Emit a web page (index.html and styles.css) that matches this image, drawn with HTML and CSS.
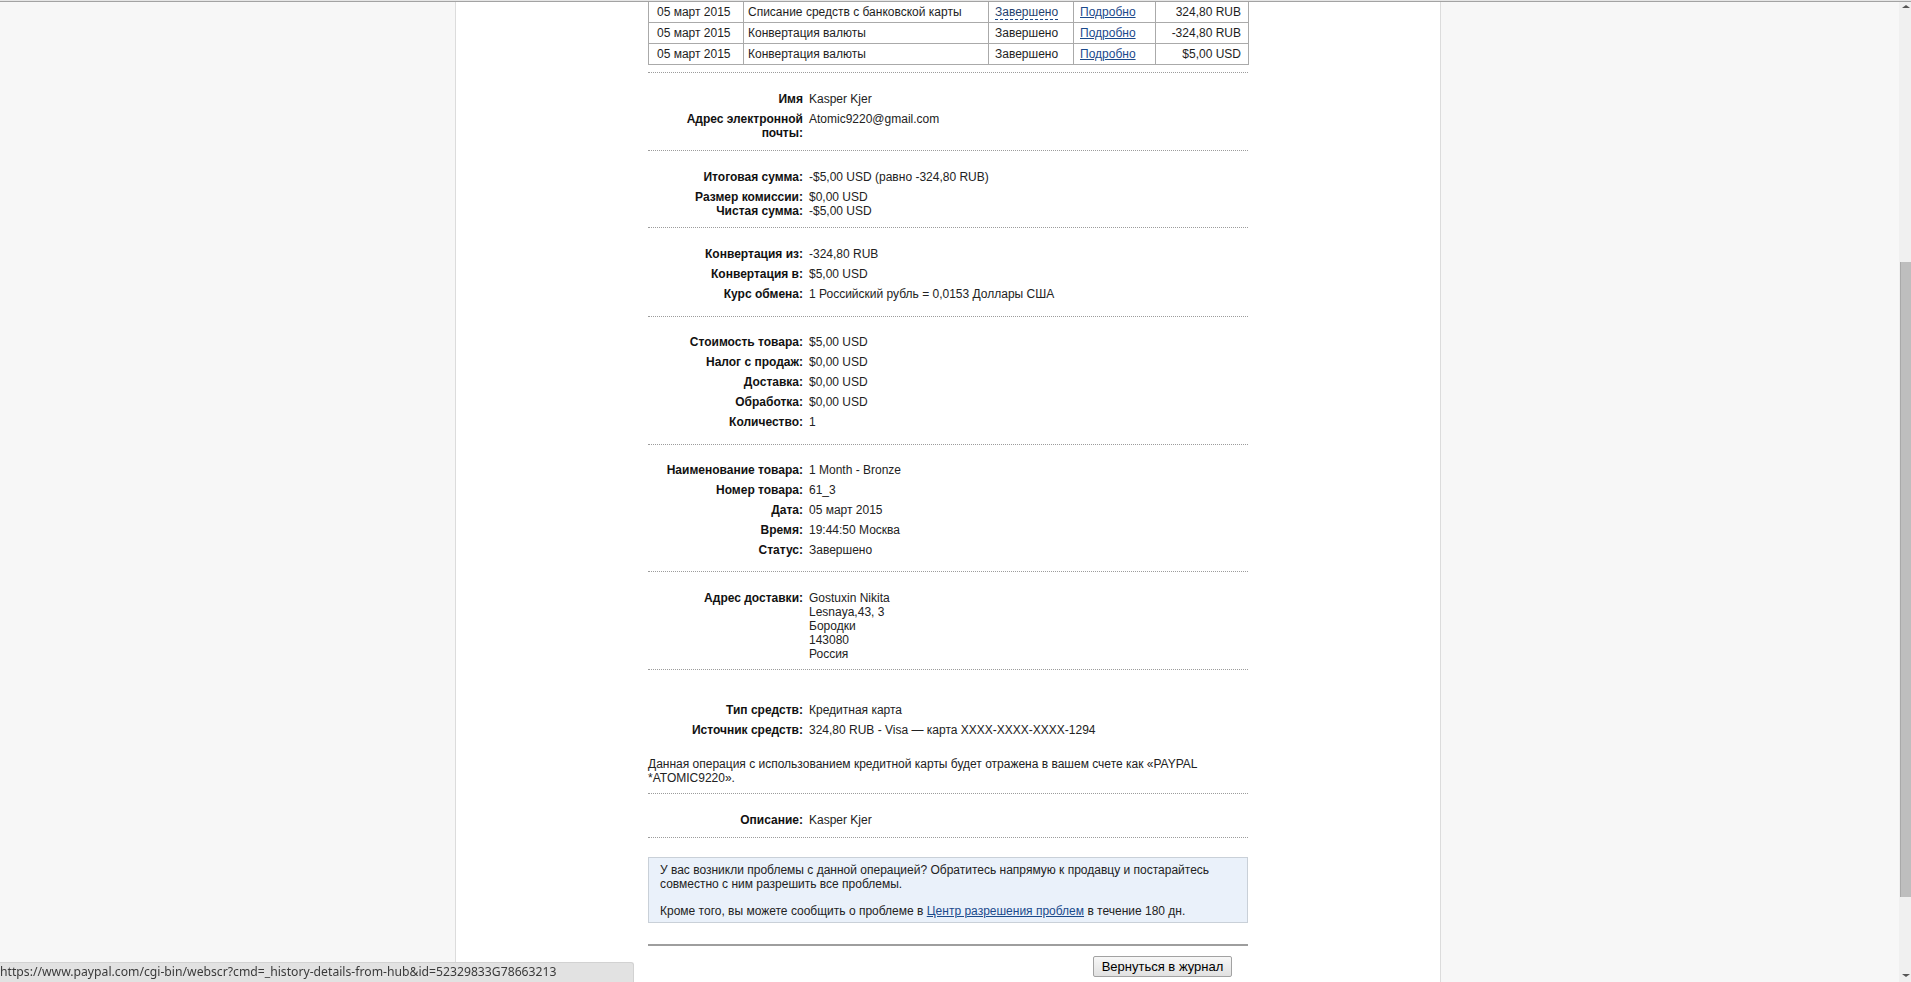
FILE: index.html
```html
<!DOCTYPE html>
<html lang="ru">
<head>
	<meta charset="UTF-8">
	<title>Подробности операции</title>
	<link rel="stylesheet" href="styles.css">
</head>
<body>
	<div class="chrome_line"></div>
	<div class="page">
		<div class="side side_l"></div>
		<div class="main">
			<div class="content">
				<div class="sec sec_table">
					<table class="hist">
						<colgroup>
							<col class="c_date"><col class="c_desc"><col class="c_stat"><col class="c_more"><col class="c_sum">
						</colgroup>
						<tr>
							<td class="t_date">05 март 2015</td>
							<td class="t_desc">Списание средств с банковской карты</td>
							<td class="t_stat"><span class="dash">Завершено</span></td>
							<td class="t_more"><a href="#">Подробно</a></td>
							<td class="t_sum">324,80 RUB</td>
						</tr>
						<tr>
							<td class="t_date">05 март 2015</td>
							<td class="t_desc">Конвертация валюты</td>
							<td class="t_stat">Завершено</td>
							<td class="t_more"><a href="#">Подробно</a></td>
							<td class="t_sum">-324,80 RUB</td>
						</tr>
						<tr>
							<td class="t_date">05 март 2015</td>
							<td class="t_desc">Конвертация валюты</td>
							<td class="t_stat">Завершено</td>
							<td class="t_more"><a href="#">Подробно</a></td>
							<td class="t_sum">$5,00 USD</td>
						</tr>
					</table>
				</div>

				<div class="sec sec_name">
					<div class="row"><div class="lbl">Имя</div><div class="val">Kasper Kjer</div></div>
					<div class="row"><div class="lbl">Адрес электронной почты:</div><div class="val">Atomic9220@gmail.com</div></div>
				</div>

				<div class="sec sec_total">
					<div class="row"><div class="lbl">Итоговая сумма:</div><div class="val">-$5,00 USD (равно -324,80 RUB)</div></div>
					<div class="row"><div class="lbl">Размер комиссии:</div><div class="val">$0,00 USD</div></div>
					<div class="row tight"><div class="lbl">Чистая сумма:</div><div class="val">-$5,00 USD</div></div>
				</div>

				<div class="sec sec_conv">
					<div class="row"><div class="lbl">Конвертация из:</div><div class="val">-324,80 RUB</div></div>
					<div class="row"><div class="lbl">Конвертация в:</div><div class="val">$5,00 USD</div></div>
					<div class="row"><div class="lbl">Курс обмена:</div><div class="val">1 Российский рубль = 0,0153 Доллары США</div></div>
				</div>

				<div class="sec sec_cost">
					<div class="row"><div class="lbl">Стоимость товара:</div><div class="val">$5,00 USD</div></div>
					<div class="row"><div class="lbl">Налог с продаж:</div><div class="val">$0,00 USD</div></div>
					<div class="row"><div class="lbl">Доставка:</div><div class="val">$0,00 USD</div></div>
					<div class="row"><div class="lbl">Обработка:</div><div class="val">$0,00 USD</div></div>
					<div class="row"><div class="lbl">Количество:</div><div class="val">1</div></div>
				</div>

				<div class="sec sec_item">
					<div class="row"><div class="lbl">Наименование товара:</div><div class="val">1 Month - Bronze</div></div>
					<div class="row"><div class="lbl">Номер товара:</div><div class="val">61_3</div></div>
					<div class="row"><div class="lbl">Дата:</div><div class="val">05 март 2015</div></div>
					<div class="row"><div class="lbl">Время:</div><div class="val">19:44:50 Москва</div></div>
					<div class="row"><div class="lbl">Статус:</div><div class="val">Завершено</div></div>
				</div>

				<div class="sec sec_addr">
					<div class="row"><div class="lbl">Адрес доставки:</div><div class="val">Gostuxin Nikita<br>Lesnaya,43, 3<br>Бородки<br>143080<br>Россия</div></div>
				</div>

				<div class="sec sec_fund">
					<div class="row"><div class="lbl">Тип средств:</div><div class="val">Кредитная карта</div></div>
					<div class="row"><div class="lbl">Источник средств:</div><div class="val">324,80 RUB - Visa — карта XXXX-XXXX-XXXX-1294</div></div>
					<p class="note">Данная операция с использованием кредитной карты будет отражена в вашем счете как «PAYPAL *ATOMIC9220».</p>
				</div>

				<div class="sec sec_desc">
					<div class="row"><div class="lbl">Описание:</div><div class="val">Kasper Kjer</div></div>
				</div>

				<div class="help">
					<p>У вас возникли проблемы с данной операцией? Обратитесь напрямую к продавцу и постарайтесь совместно с ним разрешить все проблемы.</p>
					<p>Кроме того, вы можете сообщить о проблеме в <a href="#">Центр разрешения проблем</a> в течение 180 дн.</p>
				</div>

				<div class="actions">
					<button class="btn" type="button">Вернуться в журнал</button>
				</div>
			</div>
		</div>
		<div class="side side_r"></div>
		<div class="scroll">
			<div class="sb_up"></div>
			<div class="sb_gap"></div>
			<div class="sb_thumb"></div>
			<div class="sb_rest"></div>
			<div class="sb_down"></div>
		</div>
	</div>
	<div class="status">https://www.paypal.com/cgi-bin/webscr?cmd=_history-details-from-hub&amp;id=52329833G78663213</div>
</body>
</html>
```

FILE: styles.css
```css
body{
	margin:0;
	height:982px;
	overflow:hidden;
	font:12px/14px "Liberation Sans", Arial, sans-serif;
	color:#1e1e1e;
}
p{
	margin:0;
}
a{
	color:#1b4a8c;
	text-decoration:underline;
}
.chrome_line{
	position:fixed;
	left:0;
	top:0;
	width:100%;
	height:1px;
	background:#e6e6e6;
	border-bottom:1px solid #a3a3a3;
	z-index:5;
}
.page{
	display:flex;
	height:982px;
}
.side{
	background:#f7f7f7;
}
.side_l{
	width:455px;
}
.side_r{
	flex:1;
}
.main{
	width:984px;
	padding-top:2px;
	background:#fff;
	border-left:1px solid #dcdcdc;
	border-right:1px solid #dcdcdc;
}
.content{
	width:600px;
	margin:0 auto;
}

/* history table */
.sec{
	border-bottom:1px dotted #9c9c9c;
}
.sec_table{
	padding-bottom:7px;
}
.hist{
	width:600px;
	border-collapse:collapse;
	table-layout:fixed;
}
.c_date{ width:95px; }
.c_desc{ width:245px; }
.c_stat{ width:85px; }
.c_more{ width:82px; }
.c_sum{ width:93px; }
.hist td{
	height:20px;
	padding:0 4px;
	border:1px solid #aaa;
	white-space:nowrap;
	overflow:hidden;
}
.hist tr:first-child td{
	border-top:0;
}
.hist .t_date{
	padding-left:8px;
}
.hist .t_stat,.hist .t_more{
	padding-left:6px;
}
.hist .t_sum{
	text-align:right;
	padding-right:7px;
}
.dash{
	color:#1f3f6e;
	border-bottom:1px dashed #1b4a8c;
}

/* label / value rows */
.row{
	display:flex;
	margin-top:6px;
}
.row:first-child{
	margin-top:0;
}
.row.tight{
	margin-top:0;
}
.lbl{
	width:155px;
	flex:none;
	text-align:right;
	font-weight:bold;
	color:#111;
}
.val{
	margin-left:6px;
	color:#222;
}
.sec_name{ padding:19px 0 10px; }
.sec_total{ padding:19px 0 9px; }
.sec_conv{ padding:19px 0 15px; }
.sec_cost{ padding:18px 0 15px; }
.sec_item{ padding:18px 0 14px; }
.sec_addr{ padding:19px 0 8px; }
.sec_fund{ padding:33px 0 8px; }
.sec_desc{ padding:19px 0 10px; }
.note{
	margin-top:20px;
	color:#222;
}

/* help box */
.help{
	margin-top:19px;
	padding:5px 11px 4px;
	background:#eaf1fa;
	border:1px solid #c9d0d8;
	color:#222;
}
.help p+p{
	margin-top:13px;
}
.actions{
	margin-top:21px;
	padding-top:10px;
	border-top:2px solid #9e9e9e;
	display:flex;
	justify-content:flex-end;
	padding-right:16px;
}
.btn{
	width:139px;
	height:21px;
	padding:0;
	font:13px/19px "Liberation Sans", Arial, sans-serif;
	color:#000;
	background:linear-gradient(#f7f7f7,#e1e1e1);
	border:1px solid #a2a2a2;
	border-radius:2px;
}

/* fake scrollbar */
.scroll{
	width:12px;
	display:flex;
	flex-direction:column;
	background:#f0f0f0;
}
.sb_up,.sb_down{
	height:14px;
	position:relative;
}
.sb_up:after,.sb_down:after{
	content:"";
	position:absolute;
	left:3px;
	border-left:4px solid transparent;
	border-right:4px solid transparent;
}
.sb_up:after{
	top:5px;
	border-bottom:3px solid #555;
}
.sb_down:after{
	bottom:5px;
	border-top:3px solid #555;
}
.sb_gap{
	height:248px;
}
.sb_thumb{
	height:635px;
	margin-left:1px;
	background:#bebebe;
	border-left:1px solid #a9a9a9;
}
.sb_rest{
	flex:1;
}

/* browser status bubble */
.status{
	position:fixed;
	left:0;
	bottom:0;
	width:634px;
	height:20px;
	box-sizing:border-box;
	padding:1px 0 0 0;
	background:#e2e2e2;
	border-top:1px solid #d2d2d2;
	border-right:1px solid #d2d2d2;
	border-top-right-radius:3px;
	font:12.2px/16px "Noto Sans", "Open Sans", sans-serif;
	color:#3a3a3a;
	white-space:nowrap;
	overflow:hidden;
}
```
